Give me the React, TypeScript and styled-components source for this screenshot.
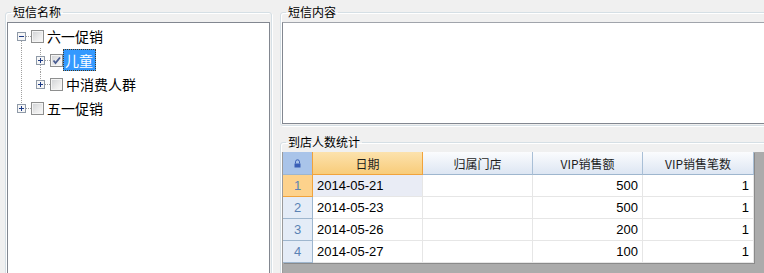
import React from 'react';
import styled, { createGlobalStyle } from 'styled-components';

const GlobalStyle = createGlobalStyle`
  html, body {
    margin: 0;
    padding: 0;
    background: #f0f0f0;
    overflow: hidden;
  }
  body {
    font-family: "Noto Sans CJK SC", "Liberation Sans", sans-serif;
    color: #000;
  }
`;

type TreeNode = {
  label: string;
  checked?: boolean;
  selected?: boolean;
  children?: TreeNode[];
};

const tree: TreeNode[] = [
  {
    label: '六一促销',
    children: [
      { label: '儿童', checked: true, selected: true, children: [] },
      { label: '中消费人群', children: [] },
    ],
  },
  { label: '五一促销', children: [] },
];

type Row = {
  node: TreeNode;
  level: number;
  guides: boolean[];
  hasUp: boolean;
  hasDown: boolean;
  expanded: boolean;
};

function flatten(nodes: TreeNode[], level: number, guides: boolean[], out: Row[]) {
  nodes.forEach((node, i) => {
    const isLast = i === nodes.length - 1;
    const expanded = level === 0 && i === 0;
    out.push({
      node,
      level,
      guides,
      hasUp: level > 0 || i > 0,
      hasDown: !isLast,
      expanded,
    });
    if (expanded && node.children) {
      flatten(node.children, level + 1, [...guides, !isLast], out);
    }
  });
  return out;
}

const salesRows = [
  { date: '2014-05-21', store: '', amount: 500, count: 1 },
  { date: '2014-05-23', store: '', amount: 500, count: 1 },
  { date: '2014-05-26', store: '', amount: 200, count: 1 },
  { date: '2014-05-27', store: '', amount: 100, count: 1 },
];

const DOT = '#a0a0a0';

function Guide({ on }: { on: boolean }) {
  return (
    <svg width={19} height={24} style={{ display: 'block', flex: 'none' }}>
      {on && <line x1={9.5} y1={0} x2={9.5} y2={24} stroke={DOT} strokeDasharray="1 1" />}
    </svg>
  );
}

function Connector({ up, down, expanded }: { up: boolean; down: boolean; expanded: boolean }) {
  return (
    <svg width={19} height={24} style={{ display: 'block', flex: 'none' }}>
      {up && <line x1={9.5} y1={0} x2={9.5} y2={8} stroke={DOT} strokeDasharray="1 1" />}
      {down && <line x1={9.5} y1={17} x2={9.5} y2={24} stroke={DOT} strokeDasharray="1 1" />}
      <line x1={14} y1={12.5} x2={19} y2={12.5} stroke={DOT} strokeDasharray="1 1" />
      <rect x={5.5} y={8.5} width={8} height={8} fill="#f6f6f6" stroke="#8f9aa8" />
      <line x1={7} y1={12.5} x2={12} y2={12.5} stroke="#1c3a86" />
      {!expanded && <line x1={9.5} y1={10} x2={9.5} y2={15} stroke="#1c3a86" />}
    </svg>
  );
}

function LockIcon() {
  return (
    <svg width={7} height={9} viewBox="0 0 7 9">
      <path d="M1.5 4.5 V2.8 a2 2 0 0 1 4 0 V4.5" fill="none" stroke="#3a5fb6" strokeWidth={1} />
      <rect x={0.5} y={4.5} width={6} height={4} fill="#3a5fb6" />
    </svg>
  );
}

function CheckMark() {
  return (
    <svg width={11} height={11} viewBox="0 0 11 11">
      <path d="M2.5 5.5 L4.5 8 L9 2.5" fill="none" stroke="#4a5d92" strokeWidth={1.8} />
    </svg>
  );
}

export default function App() {
  const rows = flatten(tree, 0, [], []);

  return (
    <>
      <GlobalStyle />
      <Page>
        <Group>
          <Legend>短信名称</Legend>
          <TreeBox>
            {rows.map((r) => (
              <TreeRow key={r.node.label}>
                {r.guides.map((g, i) => (
                  <Guide key={i} on={g} />
                ))}
                <Connector up={r.hasUp} down={r.hasDown} expanded={r.expanded} />
                <CheckBox>{r.node.checked && <CheckMark />}</CheckBox>
                <NodeLabel $selected={!!r.node.selected}>{r.node.label}</NodeLabel>
              </TreeRow>
            ))}
          </TreeBox>
        </Group>

        <RightColumn>
          <Group>
            <Legend>短信内容</Legend>
            <ContentBox />
          </Group>

          <Group $grow $gapTop={8}>
            <Legend>到店人数统计</Legend>
            <GridArea>
              <GridTable>
                <CornerCell>
                  <LockIcon />
                </CornerCell>
                <HeaderCell $active>日期</HeaderCell>
                <HeaderCell>归属门店</HeaderCell>
                <HeaderCell>VIP销售额</HeaderCell>
                <HeaderCell>VIP销售笔数</HeaderCell>

                {salesRows.map((row, i) => (
                  <React.Fragment key={row.date}>
                    <RowHeader $active={i === 0}>{i + 1}</RowHeader>
                    <DataCell $current={i === 0}>{row.date}</DataCell>
                    <DataCell>{row.store}</DataCell>
                    <DataCell $right>{row.amount}</DataCell>
                    <DataCell $right>{row.count}</DataCell>
                  </React.Fragment>
                ))}
              </GridTable>
            </GridArea>
          </Group>
        </RightColumn>
      </Page>
    </>
  );
}

const Page = styled.div`
  box-sizing: border-box;
  height: 292px;
  margin-right: -12px;
  padding: 4px 0 0 5px;
  display: grid;
  grid-template-columns: 267px 1fr;
  column-gap: 8px;
`;

const RightColumn = styled.div`
  display: flex;
  flex-direction: column;
  min-width: 0;
`;

const Group = styled.fieldset<{ $grow?: boolean; $gapTop?: number }>`
  box-sizing: border-box;
  margin: ${(p) => p.$gapTop ?? 0}px 0 0 0;
  padding: 2px 1px 1px;
  min-width: 0;
  border: 1px solid #d5dfe5;
  border-radius: 3px;
  box-shadow: inset 1px 1px 0 #fff, 1px 1px 0 #fff;
  display: flex;
  flex-direction: column;
  flex: ${(p) => (p.$grow ? '1 1 auto' : 'none')};
`;

const Legend = styled.legend`
  margin-left: 4px;
  padding: 0 2px;
  font-size: 12px;
  line-height: 16px;
  height: 16px;
`;

const TreeBox = styled.div`
  flex: 1;
  background: #fff;
  border: 1px solid #828790;
  padding: 1px 0 0 4px;
`;

const TreeRow = styled.div`
  display: flex;
  align-items: center;
  height: 24px;
`;

const CheckBox = styled.span`
  box-sizing: border-box;
  flex: none;
  width: 13px;
  height: 13px;
  border: 1px solid #8e8f8f;
  background: linear-gradient(135deg, #cfd1d4 0%, #ececec 60%, #fafafa 100%);
  box-shadow: inset 0 0 0 1px #f4f4f4;
  display: flex;
  align-items: center;
  justify-content: center;
`;

const NodeLabel = styled.span<{ $selected: boolean }>`
  margin-left: ${(p) => (p.$selected ? 0 : 1)}px;
  padding: 0 2px 0 1px;
  height: 20px;
  font-size: 14px;
  line-height: 20px;
  white-space: nowrap;
  border: 1px ${(p) => (p.$selected ? 'dotted #4a3a20' : 'solid transparent')};
  background: ${(p) => (p.$selected ? '#3399ff' : 'transparent')};
  color: ${(p) => (p.$selected ? '#fff' : '#000')};
`;

const ContentBox = styled.div`
  box-sizing: border-box;
  height: 102px;
  background: #fff;
  border: 1px solid #828790;
  border-top-color: #a0a4ab;
`;

const GridArea = styled.div`
  flex: 1;
  background: #ababab;
  border-left: 1px solid #9a9a9a;
`;

const GridTable = styled.div`
  display: grid;
  grid-template-columns: 30px 110px 110px 110px 111px;
  grid-auto-rows: 22px;
  grid-template-rows: 23px;
  width: max-content;
  background: #fff;
  box-shadow: 1px 1px 0 #8a8a8a;
  font-family: "Liberation Sans", "Noto Sans CJK SC", sans-serif;
`;

const CornerCell = styled.div`
  box-sizing: border-box;
  background: #a9c4e9;
  border-right: 1px solid #9eb6ce;
  border-bottom: 1px solid #9eb6ce;
  display: flex;
  align-items: center;
  justify-content: center;
`;

const HeaderCell = styled.div<{ $active?: boolean }>`
  box-sizing: border-box;
  display: flex;
  align-items: center;
  justify-content: center;
  font-size: 12px;
  font-family: "Noto Sans CJK SC", "Liberation Sans", sans-serif;
  color: #1e1e1e;
  background: ${(p) =>
    p.$active
      ? 'linear-gradient(#fce2ad, #f8cc7a)'
      : 'linear-gradient(#fbfcfe, #dde6f3)'};
  border-right: 1px solid ${(p) => (p.$active ? '#f1a33c' : '#a9bfd6')};
  border-bottom: 1px solid ${(p) => (p.$active ? '#f1a33c' : '#9eb6ce')};
  ${(p) => (p.$active ? 'box-shadow: -1px 0 0 #f1a33c;' : '')}
`;

const RowHeader = styled.div<{ $active?: boolean }>`
  box-sizing: border-box;
  display: flex;
  align-items: center;
  justify-content: center;
  font-size: 13px;
  color: #5a82b4;
  background: ${(p) => (p.$active ? '#fdd28c' : '#e4ecf7')};
  border-right: 1px solid ${(p) => (p.$active ? '#f1a33c' : '#9eb6ce')};
  border-bottom: 1px solid ${(p) => (p.$active ? '#f1a33c' : '#9eb6ce')};
`;

const DataCell = styled.div<{ $right?: boolean; $current?: boolean }>`
  box-sizing: border-box;
  display: flex;
  align-items: center;
  justify-content: ${(p) => (p.$right ? 'flex-end' : 'flex-start')};
  padding: 0 ${(p) => (p.$right ? 4 : 0)}px 0 ${(p) => (p.$right ? 0 : 4)}px;
  font-size: 13px;
  background: ${(p) => (p.$current ? '#e9ecf5' : '#fff')};
  border-right: 1px solid #e6e6e6;
  border-bottom: 1px solid #e6e6e6;
`;
